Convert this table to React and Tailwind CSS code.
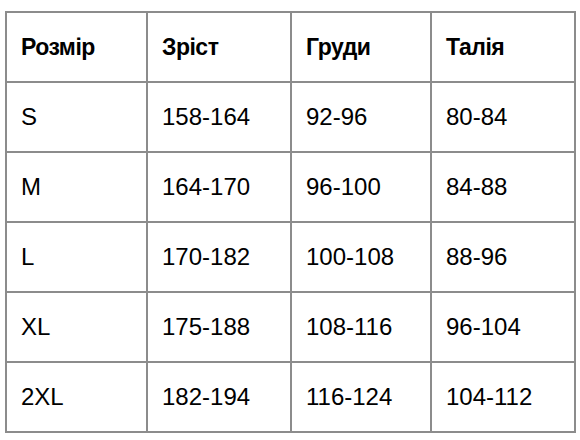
export default function App() {
  const rows = [
    ["S", "158-164", "92-96", "80-84"],
    ["M", "164-170", "96-100", "84-88"],
    ["L", "170-182", "100-108", "88-96"],
    ["XL", "175-188", "108-116", "96-104"],
    ["2XL", "182-194", "116-124", "104-112"],
  ];
  const header = ["Розмір", "Зріст", "Груди", "Талія"];
  const cell =
    "h-[70px] flex items-center pl-[14px] border-r-2 border-b-2 border-[#8c8c8c]";
  return (
    <div className="w-[580px] h-[440px] bg-white pt-[11px] pl-[5px]" style={{ fontFamily: '"Liberation Sans", Arial, sans-serif' }}>
      <div className="grid grid-cols-[141px_144px_140px_144px] w-[571px] border-t-2 border-l-2 border-[#8c8c8c] text-black leading-none">
        {header.map((h) => (
          <div key={h} className={cell + " text-[23px] font-bold tracking-[-0.5px]"}>
            {h}
          </div>
        ))}
        {rows.map((r) =>
          r.map((c, i) => (
            <div key={r[0] + i} className={cell + " text-[24px]"}>
              {c}
            </div>
          ))
        )}
      </div>
    </div>
  );
}
